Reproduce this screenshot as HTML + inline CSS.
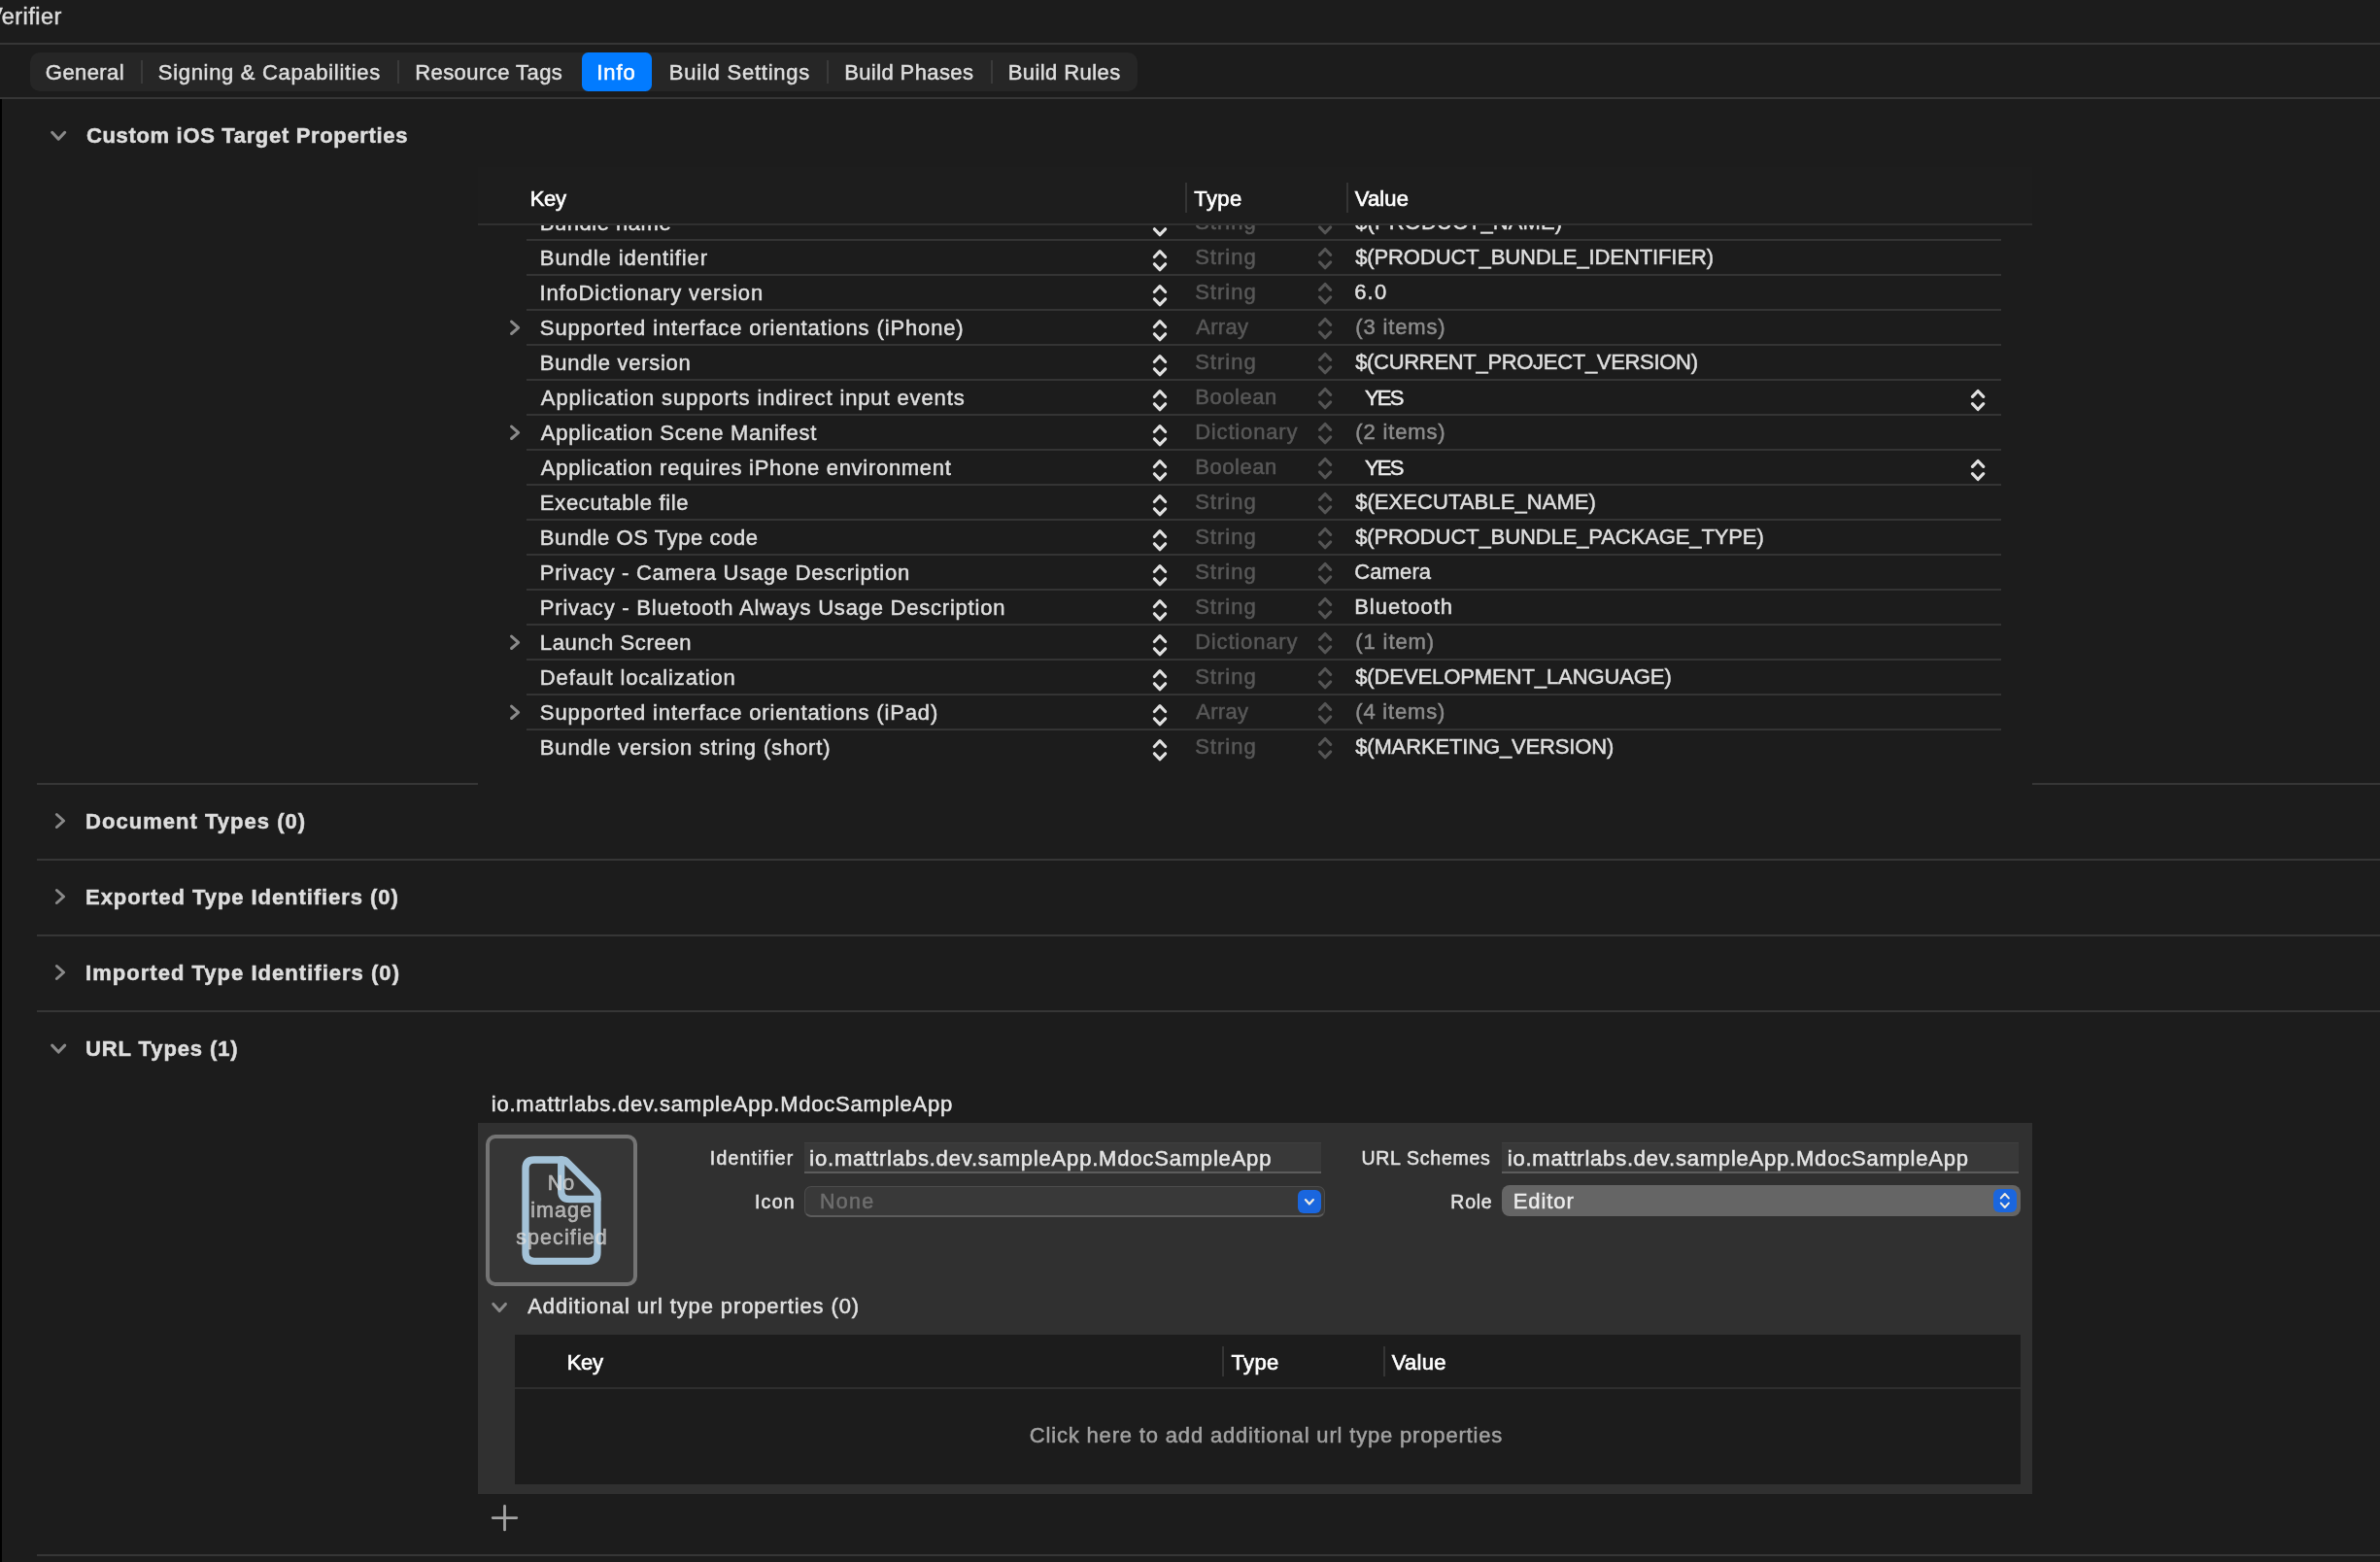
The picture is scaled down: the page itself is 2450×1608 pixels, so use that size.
<!DOCTYPE html>
<html lang="en"><head><meta charset="utf-8"><title>Verifier — Info</title>
<style>
html,body{margin:0;padding:0;background:#1c1c1c;}
body{width:2450px;height:1608px;position:relative;font-family:"Liberation Sans",sans-serif;}
#root{position:absolute;left:0;top:0;width:2450px;height:1608px;overflow:hidden;will-change:transform;}
#root header,#root nav,#root section{position:absolute;left:0;top:0;width:0;height:0;display:block;}
#root div{position:absolute;box-sizing:border-box;}
#root svg{position:absolute;left:0;top:0;overflow:visible;}
#root span{position:absolute;white-space:pre;}
</style></head><body><div id="root">
<header class="titlebar" aria-label="Jump bar">
<div style="left:0px;top:44px;width:2450px;height:2px;background:#363636;"></div>
<div style="left:0px;top:102px;width:2px;height:1506px;background:#000;"></div>
<span class="t" style="left:-13.01px;top:1.56px;font-size:23.5px;line-height:31px;color:#dcdcdc;-webkit-text-stroke:0.5px #dcdcdc;letter-spacing:0.450px;">Verifier</span>
</header>
<nav class="tabbar" aria-label="Target editor tabs">
<div style="left:0px;top:100px;width:2450px;height:2px;background:#363636;"></div>
<div style="left:31px;top:54px;width:1140px;height:40px;background:#262626;border-radius:10px;"></div>
<div style="left:145px;top:62px;width:2px;height:24px;background:#3a3a3a;"></div>
<div style="left:409px;top:62px;width:2px;height:24px;background:#3a3a3a;"></div>
<div style="left:851px;top:62px;width:2px;height:24px;background:#3a3a3a;"></div>
<div style="left:1020px;top:62px;width:2px;height:24px;background:#3a3a3a;"></div>
<div style="left:599px;top:54px;width:72px;height:40px;background:#027bff;border-radius:6.5px;"></div>
<span class="t" style="left:46.85px;top:59.78px;font-size:22px;line-height:29px;color:#dedede;-webkit-text-stroke:0.5px #dedede;letter-spacing:0.420px;">General</span>
<span class="t" style="left:162.85px;top:59.78px;font-size:22px;line-height:29px;color:#dedede;-webkit-text-stroke:0.5px #dedede;letter-spacing:0.685px;">Signing &amp; Capabilities</span>
<span class="t" style="left:427.15px;top:59.78px;font-size:22px;line-height:29px;color:#dedede;-webkit-text-stroke:0.5px #dedede;letter-spacing:0.447px;">Resource Tags</span>
<span class="t" style="left:614.25px;top:59.78px;font-size:22px;line-height:29px;color:#ffffff;-webkit-text-stroke:0.5px #ffffff;letter-spacing:0.913px;">Info</span>
<span class="t" style="left:688.75px;top:59.78px;font-size:22px;line-height:29px;color:#dedede;-webkit-text-stroke:0.5px #dedede;letter-spacing:0.775px;">Build Settings</span>
<span class="t" style="left:869.15px;top:59.78px;font-size:22px;line-height:29px;color:#dedede;-webkit-text-stroke:0.5px #dedede;letter-spacing:0.399px;">Build Phases</span>
<span class="t" style="left:1037.75px;top:59.78px;font-size:22px;line-height:29px;color:#dedede;-webkit-text-stroke:0.5px #dedede;letter-spacing:0.422px;">Build Rules</span>
</nav>
<section class="custom-properties" aria-label="Custom iOS Target Properties">
<div style="left:492px;top:172px;width:1600px;height:58px;background:#1d1d1d;"></div>
<div style="left:492px;top:230px;width:1600px;height:2px;background:#303030;"></div>
<div style="left:1220px;top:188px;width:2px;height:31px;background:#353535;"></div>
<div style="left:1386px;top:188px;width:2px;height:31px;background:#353535;"></div>
<div style="left:542px;top:246px;width:1518px;height:2px;background:#343434;"></div>
<div style="left:542px;top:282px;width:1518px;height:2px;background:#343434;"></div>
<div style="left:542px;top:318px;width:1518px;height:2px;background:#343434;"></div>
<div style="left:542px;top:354px;width:1518px;height:2px;background:#343434;"></div>
<div style="left:542px;top:390px;width:1518px;height:2px;background:#343434;"></div>
<div style="left:542px;top:426px;width:1518px;height:2px;background:#343434;"></div>
<div style="left:542px;top:462px;width:1518px;height:2px;background:#343434;"></div>
<div style="left:542px;top:498px;width:1518px;height:2px;background:#343434;"></div>
<div style="left:542px;top:534px;width:1518px;height:2px;background:#343434;"></div>
<div style="left:542px;top:570px;width:1518px;height:2px;background:#343434;"></div>
<div style="left:542px;top:606px;width:1518px;height:2px;background:#343434;"></div>
<div style="left:542px;top:642px;width:1518px;height:2px;background:#343434;"></div>
<div style="left:542px;top:678px;width:1518px;height:2px;background:#343434;"></div>
<div style="left:542px;top:714px;width:1518px;height:2px;background:#343434;"></div>
<div style="left:542px;top:750px;width:1518px;height:2px;background:#343434;"></div>
<div style="left:38px;top:806px;width:454px;height:2px;background:#363636;"></div>
<div style="left:2092px;top:806px;width:358px;height:2px;background:#363636;"></div>
<svg width="2450" height="1608" viewBox="0 0 2450 1608" fill="none" stroke-linecap="round" stroke-linejoin="round" aria-hidden="true"><path d="M53.7 136.3L60.2 143.2L66.7 136.3" stroke="#8a8a8a" stroke-width="3.1"/><path d="M1188.4 235.8L1194 241.7L1199.6 235.8" stroke="#e0e0e0" stroke-width="3.2"/><path d="M1358.5 233.85L1364.1 239.75L1369.7 233.85" stroke="#555555" stroke-width="3.1"/><path d="M1188.4 264.5L1194 258.6L1199.6 264.5" stroke="#e0e0e0" stroke-width="3.2"/><path d="M1358.5 262.35L1364.1 256.45L1369.7 262.35" stroke="#555555" stroke-width="3.1"/><path d="M1188.4 271.8L1194 277.7L1199.6 271.8" stroke="#e0e0e0" stroke-width="3.2"/><path d="M1358.5 269.85L1364.1 275.75L1369.7 269.85" stroke="#555555" stroke-width="3.1"/><path d="M1188.4 300.5L1194 294.6L1199.6 300.5" stroke="#e0e0e0" stroke-width="3.2"/><path d="M1358.5 298.35L1364.1 292.45L1369.7 298.35" stroke="#555555" stroke-width="3.1"/><path d="M1188.4 307.8L1194 313.7L1199.6 307.8" stroke="#e0e0e0" stroke-width="3.2"/><path d="M1358.5 305.85L1364.1 311.75L1369.7 305.85" stroke="#555555" stroke-width="3.1"/><path d="M1188.4 336.5L1194 330.6L1199.6 336.5" stroke="#e0e0e0" stroke-width="3.2"/><path d="M1358.5 334.35L1364.1 328.45L1369.7 334.35" stroke="#555555" stroke-width="3.1"/><path d="M1188.4 343.8L1194 349.7L1199.6 343.8" stroke="#e0e0e0" stroke-width="3.2"/><path d="M1358.5 341.85L1364.1 347.75L1369.7 341.85" stroke="#555555" stroke-width="3.1"/><path d="M526.55 331.1L533.65 337.3L526.55 343.5" stroke="#8a8a8a" stroke-width="3.0"/><path d="M1188.4 372.5L1194 366.6L1199.6 372.5" stroke="#e0e0e0" stroke-width="3.2"/><path d="M1358.5 370.35L1364.1 364.45L1369.7 370.35" stroke="#555555" stroke-width="3.1"/><path d="M1188.4 379.8L1194 385.7L1199.6 379.8" stroke="#e0e0e0" stroke-width="3.2"/><path d="M1358.5 377.85L1364.1 383.75L1369.7 377.85" stroke="#555555" stroke-width="3.1"/><path d="M2030.5 408.4L2036.1 402.5L2041.7 408.4" stroke="#e0e0e0" stroke-width="3.2"/><path d="M2030.5 415.6L2036.1 421.5L2041.7 415.6" stroke="#e0e0e0" stroke-width="3.2"/><path d="M1188.4 408.5L1194 402.6L1199.6 408.5" stroke="#e0e0e0" stroke-width="3.2"/><path d="M1358.5 406.35L1364.1 400.45L1369.7 406.35" stroke="#555555" stroke-width="3.1"/><path d="M1188.4 415.8L1194 421.7L1199.6 415.8" stroke="#e0e0e0" stroke-width="3.2"/><path d="M1358.5 413.85L1364.1 419.75L1369.7 413.85" stroke="#555555" stroke-width="3.1"/><path d="M1188.4 444.5L1194 438.6L1199.6 444.5" stroke="#e0e0e0" stroke-width="3.2"/><path d="M1358.5 442.35L1364.1 436.45L1369.7 442.35" stroke="#555555" stroke-width="3.1"/><path d="M1188.4 451.8L1194 457.7L1199.6 451.8" stroke="#e0e0e0" stroke-width="3.2"/><path d="M1358.5 449.85L1364.1 455.75L1369.7 449.85" stroke="#555555" stroke-width="3.1"/><path d="M526.55 439.1L533.65 445.3L526.55 451.5" stroke="#8a8a8a" stroke-width="3.0"/><path d="M2030.5 480.4L2036.1 474.5L2041.7 480.4" stroke="#e0e0e0" stroke-width="3.2"/><path d="M2030.5 487.6L2036.1 493.5L2041.7 487.6" stroke="#e0e0e0" stroke-width="3.2"/><path d="M1188.4 480.5L1194 474.6L1199.6 480.5" stroke="#e0e0e0" stroke-width="3.2"/><path d="M1358.5 478.35L1364.1 472.45L1369.7 478.35" stroke="#555555" stroke-width="3.1"/><path d="M1188.4 487.8L1194 493.7L1199.6 487.8" stroke="#e0e0e0" stroke-width="3.2"/><path d="M1358.5 485.85L1364.1 491.75L1369.7 485.85" stroke="#555555" stroke-width="3.1"/><path d="M1188.4 516.5L1194 510.6L1199.6 516.5" stroke="#e0e0e0" stroke-width="3.2"/><path d="M1358.5 514.35L1364.1 508.45L1369.7 514.35" stroke="#555555" stroke-width="3.1"/><path d="M1188.4 523.8L1194 529.7L1199.6 523.8" stroke="#e0e0e0" stroke-width="3.2"/><path d="M1358.5 521.85L1364.1 527.75L1369.7 521.85" stroke="#555555" stroke-width="3.1"/><path d="M1188.4 552.5L1194 546.6L1199.6 552.5" stroke="#e0e0e0" stroke-width="3.2"/><path d="M1358.5 550.35L1364.1 544.45L1369.7 550.35" stroke="#555555" stroke-width="3.1"/><path d="M1188.4 559.8L1194 565.7L1199.6 559.8" stroke="#e0e0e0" stroke-width="3.2"/><path d="M1358.5 557.85L1364.1 563.75L1369.7 557.85" stroke="#555555" stroke-width="3.1"/><path d="M1188.4 588.5L1194 582.6L1199.6 588.5" stroke="#e0e0e0" stroke-width="3.2"/><path d="M1358.5 586.35L1364.1 580.45L1369.7 586.35" stroke="#555555" stroke-width="3.1"/><path d="M1188.4 595.8L1194 601.7L1199.6 595.8" stroke="#e0e0e0" stroke-width="3.2"/><path d="M1358.5 593.85L1364.1 599.75L1369.7 593.85" stroke="#555555" stroke-width="3.1"/><path d="M1188.4 624.5L1194 618.6L1199.6 624.5" stroke="#e0e0e0" stroke-width="3.2"/><path d="M1358.5 622.35L1364.1 616.45L1369.7 622.35" stroke="#555555" stroke-width="3.1"/><path d="M1188.4 631.8L1194 637.7L1199.6 631.8" stroke="#e0e0e0" stroke-width="3.2"/><path d="M1358.5 629.85L1364.1 635.75L1369.7 629.85" stroke="#555555" stroke-width="3.1"/><path d="M1188.4 660.5L1194 654.6L1199.6 660.5" stroke="#e0e0e0" stroke-width="3.2"/><path d="M1358.5 658.35L1364.1 652.45L1369.7 658.35" stroke="#555555" stroke-width="3.1"/><path d="M1188.4 667.8L1194 673.7L1199.6 667.8" stroke="#e0e0e0" stroke-width="3.2"/><path d="M1358.5 665.85L1364.1 671.75L1369.7 665.85" stroke="#555555" stroke-width="3.1"/><path d="M526.55 655.1L533.65 661.3L526.55 667.5" stroke="#8a8a8a" stroke-width="3.0"/><path d="M1188.4 696.5L1194 690.6L1199.6 696.5" stroke="#e0e0e0" stroke-width="3.2"/><path d="M1358.5 694.35L1364.1 688.45L1369.7 694.35" stroke="#555555" stroke-width="3.1"/><path d="M1188.4 703.8L1194 709.7L1199.6 703.8" stroke="#e0e0e0" stroke-width="3.2"/><path d="M1358.5 701.85L1364.1 707.75L1369.7 701.85" stroke="#555555" stroke-width="3.1"/><path d="M1188.4 732.5L1194 726.6L1199.6 732.5" stroke="#e0e0e0" stroke-width="3.2"/><path d="M1358.5 730.35L1364.1 724.45L1369.7 730.35" stroke="#555555" stroke-width="3.1"/><path d="M1188.4 739.8L1194 745.7L1199.6 739.8" stroke="#e0e0e0" stroke-width="3.2"/><path d="M1358.5 737.85L1364.1 743.75L1369.7 737.85" stroke="#555555" stroke-width="3.1"/><path d="M526.55 727.1L533.65 733.3L526.55 739.5" stroke="#8a8a8a" stroke-width="3.0"/><path d="M1188.4 768.5L1194 762.6L1199.6 768.5" stroke="#e0e0e0" stroke-width="3.2"/><path d="M1358.5 766.35L1364.1 760.45L1369.7 766.35" stroke="#555555" stroke-width="3.1"/><path d="M1188.4 775.8L1194 781.7L1199.6 775.8" stroke="#e0e0e0" stroke-width="3.2"/><path d="M1358.5 773.85L1364.1 779.75L1369.7 773.85" stroke="#555555" stroke-width="3.1"/></svg>
<span class="t" style="left:88.95px;top:125.38px;font-size:22px;line-height:29px;color:#dedede;font-weight:700;-webkit-text-stroke:0.5px #dedede;letter-spacing:0.666px;">Custom iOS Target Properties</span>
<span class="t" style="left:545.73px;top:190.18px;font-size:22px;line-height:29px;color:#ffffff;-webkit-text-stroke:0.65px #ffffff;letter-spacing:-0.280px;">Key</span>
<span class="t" style="left:1229.33px;top:190.18px;font-size:22px;line-height:29px;color:#ffffff;-webkit-text-stroke:0.65px #ffffff;letter-spacing:0.363px;">Type</span>
<span class="t" style="left:1394.73px;top:190.18px;font-size:22px;line-height:29px;color:#ffffff;-webkit-text-stroke:0.65px #ffffff;letter-spacing:0.138px;">Value</span>
<span class="t" style="left:555.85px;top:214.58px;font-size:22px;line-height:29px;color:#dfdfdf;-webkit-text-stroke:0.5px #dfdfdf;letter-spacing:0.519px;clip-path:inset(17.4px 0 0 0);">Bundle name</span>
<span class="t" style="left:1230.15px;top:213.88px;font-size:22px;line-height:29px;color:#585858;-webkit-text-stroke:0.5px #585858;letter-spacing:1.013px;clip-path:inset(18.1px 0 0 0);">String</span>
<span class="t" style="left:1395.15px;top:214.08px;font-size:22px;line-height:29px;color:#dfdfdf;-webkit-text-stroke:0.5px #dfdfdf;letter-spacing:0.105px;clip-path:inset(17.9px 0 0 0);">$(PRODUCT_NAME)</span>
<span class="t" style="left:555.85px;top:250.58px;font-size:22px;line-height:29px;color:#dfdfdf;-webkit-text-stroke:0.5px #dfdfdf;letter-spacing:0.897px;">Bundle identifier</span>
<span class="t" style="left:1230.15px;top:249.88px;font-size:22px;line-height:29px;color:#585858;-webkit-text-stroke:0.5px #585858;letter-spacing:1.013px;">String</span>
<span class="t" style="left:1395.15px;top:250.08px;font-size:22px;line-height:29px;color:#dfdfdf;-webkit-text-stroke:0.5px #dfdfdf;letter-spacing:-0.099px;">$(PRODUCT_BUNDLE_IDENTIFIER)</span>
<span class="t" style="left:555.45px;top:286.58px;font-size:22px;line-height:29px;color:#dfdfdf;-webkit-text-stroke:0.5px #dfdfdf;letter-spacing:0.867px;">InfoDictionary version</span>
<span class="t" style="left:1230.15px;top:285.88px;font-size:22px;line-height:29px;color:#585858;-webkit-text-stroke:0.5px #585858;letter-spacing:1.013px;">String</span>
<span class="t" style="left:1394.15px;top:286.08px;font-size:22px;line-height:29px;color:#dfdfdf;-webkit-text-stroke:0.5px #dfdfdf;letter-spacing:1.226px;">6.0</span>
<span class="t" style="left:555.85px;top:322.58px;font-size:22px;line-height:29px;color:#dfdfdf;-webkit-text-stroke:0.5px #dfdfdf;letter-spacing:0.867px;">Supported interface orientations (iPhone)</span>
<span class="t" style="left:1231.15px;top:321.88px;font-size:22px;line-height:29px;color:#585858;-webkit-text-stroke:0.5px #585858;letter-spacing:0.335px;">Array</span>
<span class="t" style="left:1395.25px;top:322.08px;font-size:22px;line-height:29px;color:#8c8c8c;-webkit-text-stroke:0.5px #8c8c8c;letter-spacing:0.846px;">(3 items)</span>
<span class="t" style="left:555.85px;top:358.58px;font-size:22px;line-height:29px;color:#dfdfdf;-webkit-text-stroke:0.5px #dfdfdf;letter-spacing:0.715px;">Bundle version</span>
<span class="t" style="left:1230.15px;top:357.88px;font-size:22px;line-height:29px;color:#585858;-webkit-text-stroke:0.5px #585858;letter-spacing:1.013px;">String</span>
<span class="t" style="left:1395.15px;top:358.08px;font-size:22px;line-height:29px;color:#dfdfdf;-webkit-text-stroke:0.5px #dfdfdf;letter-spacing:-0.311px;">$(CURRENT_PROJECT_VERSION)</span>
<span class="t" style="left:556.85px;top:394.58px;font-size:22px;line-height:29px;color:#dfdfdf;-webkit-text-stroke:0.5px #dfdfdf;letter-spacing:0.876px;">Application supports indirect input events</span>
<span class="t" style="left:1230.15px;top:393.88px;font-size:22px;line-height:29px;color:#585858;-webkit-text-stroke:0.5px #585858;letter-spacing:0.566px;">Boolean</span>
<span class="t" style="left:1404.95px;top:394.88px;font-size:22px;line-height:29px;color:#ebebeb;-webkit-text-stroke:0.5px #ebebeb;letter-spacing:-1.774px;">YES</span>
<span class="t" style="left:556.85px;top:430.58px;font-size:22px;line-height:29px;color:#dfdfdf;-webkit-text-stroke:0.5px #dfdfdf;letter-spacing:0.721px;">Application Scene Manifest</span>
<span class="t" style="left:1230.15px;top:429.88px;font-size:22px;line-height:29px;color:#585858;-webkit-text-stroke:0.5px #585858;letter-spacing:0.832px;">Dictionary</span>
<span class="t" style="left:1395.25px;top:430.08px;font-size:22px;line-height:29px;color:#8c8c8c;-webkit-text-stroke:0.5px #8c8c8c;letter-spacing:0.846px;">(2 items)</span>
<span class="t" style="left:556.85px;top:466.58px;font-size:22px;line-height:29px;color:#dfdfdf;-webkit-text-stroke:0.5px #dfdfdf;letter-spacing:0.711px;">Application requires iPhone environment</span>
<span class="t" style="left:1230.15px;top:465.88px;font-size:22px;line-height:29px;color:#585858;-webkit-text-stroke:0.5px #585858;letter-spacing:0.566px;">Boolean</span>
<span class="t" style="left:1404.95px;top:466.88px;font-size:22px;line-height:29px;color:#ebebeb;-webkit-text-stroke:0.5px #ebebeb;letter-spacing:-1.774px;">YES</span>
<span class="t" style="left:555.85px;top:502.58px;font-size:22px;line-height:29px;color:#dfdfdf;-webkit-text-stroke:0.5px #dfdfdf;letter-spacing:0.689px;">Executable file</span>
<span class="t" style="left:1230.15px;top:501.88px;font-size:22px;line-height:29px;color:#585858;-webkit-text-stroke:0.5px #585858;letter-spacing:1.013px;">String</span>
<span class="t" style="left:1395.15px;top:502.08px;font-size:22px;line-height:29px;color:#dfdfdf;-webkit-text-stroke:0.5px #dfdfdf;letter-spacing:0.070px;">$(EXECUTABLE_NAME)</span>
<span class="t" style="left:555.85px;top:538.58px;font-size:22px;line-height:29px;color:#dfdfdf;-webkit-text-stroke:0.5px #dfdfdf;letter-spacing:0.584px;">Bundle OS Type code</span>
<span class="t" style="left:1230.15px;top:537.88px;font-size:22px;line-height:29px;color:#585858;-webkit-text-stroke:0.5px #585858;letter-spacing:1.013px;">String</span>
<span class="t" style="left:1395.15px;top:538.08px;font-size:22px;line-height:29px;color:#dfdfdf;-webkit-text-stroke:0.5px #dfdfdf;letter-spacing:-0.110px;">$(PRODUCT_BUNDLE_PACKAGE_TYPE)</span>
<span class="t" style="left:555.85px;top:574.58px;font-size:22px;line-height:29px;color:#dfdfdf;-webkit-text-stroke:0.5px #dfdfdf;letter-spacing:0.744px;">Privacy - Camera Usage Description</span>
<span class="t" style="left:1230.15px;top:573.88px;font-size:22px;line-height:29px;color:#585858;-webkit-text-stroke:0.5px #585858;letter-spacing:1.013px;">String</span>
<span class="t" style="left:1394.15px;top:574.08px;font-size:22px;line-height:29px;color:#dfdfdf;-webkit-text-stroke:0.5px #dfdfdf;letter-spacing:0.138px;">Camera</span>
<span class="t" style="left:555.85px;top:610.58px;font-size:22px;line-height:29px;color:#dfdfdf;-webkit-text-stroke:0.5px #dfdfdf;letter-spacing:0.778px;">Privacy - Bluetooth Always Usage Description</span>
<span class="t" style="left:1230.15px;top:609.88px;font-size:22px;line-height:29px;color:#585858;-webkit-text-stroke:0.5px #585858;letter-spacing:1.013px;">String</span>
<span class="t" style="left:1394.15px;top:610.08px;font-size:22px;line-height:29px;color:#dfdfdf;-webkit-text-stroke:0.5px #dfdfdf;letter-spacing:0.997px;">Bluetooth</span>
<span class="t" style="left:555.85px;top:646.58px;font-size:22px;line-height:29px;color:#dfdfdf;-webkit-text-stroke:0.5px #dfdfdf;letter-spacing:0.628px;">Launch Screen</span>
<span class="t" style="left:1230.15px;top:645.88px;font-size:22px;line-height:29px;color:#585858;-webkit-text-stroke:0.5px #585858;letter-spacing:0.832px;">Dictionary</span>
<span class="t" style="left:1395.25px;top:646.08px;font-size:22px;line-height:29px;color:#8c8c8c;-webkit-text-stroke:0.5px #8c8c8c;letter-spacing:0.895px;">(1 item)</span>
<span class="t" style="left:555.85px;top:682.58px;font-size:22px;line-height:29px;color:#dfdfdf;-webkit-text-stroke:0.5px #dfdfdf;letter-spacing:0.857px;">Default localization</span>
<span class="t" style="left:1230.15px;top:681.88px;font-size:22px;line-height:29px;color:#585858;-webkit-text-stroke:0.5px #585858;letter-spacing:1.013px;">String</span>
<span class="t" style="left:1395.15px;top:682.08px;font-size:22px;line-height:29px;color:#dfdfdf;-webkit-text-stroke:0.5px #dfdfdf;letter-spacing:-0.091px;">$(DEVELOPMENT_LANGUAGE)</span>
<span class="t" style="left:555.85px;top:718.58px;font-size:22px;line-height:29px;color:#dfdfdf;-webkit-text-stroke:0.5px #dfdfdf;letter-spacing:0.862px;">Supported interface orientations (iPad)</span>
<span class="t" style="left:1231.15px;top:717.88px;font-size:22px;line-height:29px;color:#585858;-webkit-text-stroke:0.5px #585858;letter-spacing:0.335px;">Array</span>
<span class="t" style="left:1395.25px;top:718.08px;font-size:22px;line-height:29px;color:#8c8c8c;-webkit-text-stroke:0.5px #8c8c8c;letter-spacing:0.808px;">(4 items)</span>
<span class="t" style="left:555.85px;top:754.58px;font-size:22px;line-height:29px;color:#dfdfdf;-webkit-text-stroke:0.5px #dfdfdf;letter-spacing:0.840px;">Bundle version string (short)</span>
<span class="t" style="left:1230.15px;top:753.88px;font-size:22px;line-height:29px;color:#585858;-webkit-text-stroke:0.5px #585858;letter-spacing:1.013px;">String</span>
<span class="t" style="left:1395.15px;top:754.08px;font-size:22px;line-height:29px;color:#dfdfdf;-webkit-text-stroke:0.5px #dfdfdf;letter-spacing:-0.142px;">$(MARKETING_VERSION)</span>
</section>
<section class="document-types" aria-label="Document Types (0)">
<div style="left:38px;top:884px;width:2412px;height:2px;background:#363636;"></div>
<svg width="2450" height="1608" viewBox="0 0 2450 1608" fill="none" stroke-linecap="round" stroke-linejoin="round" aria-hidden="true"><path d="M58.4 838.5L65.6 845L58.4 851.5" stroke="#8a8a8a" stroke-width="3.0"/></svg>
<span class="t" style="left:88.05px;top:831.38px;font-size:22px;line-height:29px;color:#dedede;font-weight:700;-webkit-text-stroke:0.5px #dedede;letter-spacing:1.030px;">Document Types (0)</span>
</section>
<section class="exported-types" aria-label="Exported Type Identifiers (0)">
<div style="left:38px;top:962px;width:2412px;height:2px;background:#363636;"></div>
<svg width="2450" height="1608" viewBox="0 0 2450 1608" fill="none" stroke-linecap="round" stroke-linejoin="round" aria-hidden="true"><path d="M58.4 916.5L65.6 923L58.4 929.5" stroke="#8a8a8a" stroke-width="3.0"/></svg>
<span class="t" style="left:88.05px;top:909.38px;font-size:22px;line-height:29px;color:#dedede;font-weight:700;-webkit-text-stroke:0.5px #dedede;letter-spacing:0.939px;">Exported Type Identifiers (0)</span>
</section>
<section class="imported-types" aria-label="Imported Type Identifiers (0)">
<div style="left:38px;top:1040px;width:2412px;height:2px;background:#363636;"></div>
<svg width="2450" height="1608" viewBox="0 0 2450 1608" fill="none" stroke-linecap="round" stroke-linejoin="round" aria-hidden="true"><path d="M58.4 994.5L65.6 1001L58.4 1007.5" stroke="#8a8a8a" stroke-width="3.0"/></svg>
<span class="t" style="left:88.05px;top:987.38px;font-size:22px;line-height:29px;color:#dedede;font-weight:700;-webkit-text-stroke:0.5px #dedede;letter-spacing:1.026px;">Imported Type Identifiers (0)</span>
</section>
<section class="url-types" aria-label="URL Types (1)">
<div style="left:492px;top:1156px;width:1600px;height:382px;background:#303030;"></div>
<div style="left:500px;top:1168px;width:156px;height:156px;background:#363636;border:4px solid #747474;border-radius:10px;"></div>
<div style="left:828px;top:1176px;width:532px;height:32px;background:#393939;border-bottom:2px solid #5c5c5c;border-top:1px solid #3f3f3f;"></div>
<div style="left:1546px;top:1176px;width:532px;height:32px;background:#393939;border-bottom:2px solid #5c5c5c;border-top:1px solid #3f3f3f;"></div>
<div style="left:828px;top:1221px;width:536px;height:32px;background:#393939;border:1px solid #4c4c4c;border-bottom:2px solid #5c5c5c;border-radius:7px;"></div>
<div style="left:1336px;top:1225px;width:24px;height:24px;background:#1a66de;border-radius:6px;"></div>
<div style="left:1546px;top:1220px;width:534px;height:32px;background:#656565;border-radius:8px;"></div>
<div style="left:2052px;top:1224px;width:24px;height:24px;background:#1a66de;border-radius:6px;"></div>
<div style="left:530px;top:1374px;width:1550px;height:154px;background:#1c1c1c;"></div>
<div style="left:530px;top:1428px;width:1550px;height:2px;background:#2e2e2e;"></div>
<div style="left:1258px;top:1386px;width:2px;height:31px;background:#353535;"></div>
<div style="left:1424px;top:1386px;width:2px;height:31px;background:#353535;"></div>
<div style="left:38px;top:1600px;width:2412px;height:2px;background:#363636;"></div>
<svg width="2450" height="1608" viewBox="0 0 2450 1608" fill="none" stroke-linecap="round" stroke-linejoin="round" aria-hidden="true"><path d="M53.7 1076.15L60.2 1083.05L66.7 1076.15" stroke="#8a8a8a" stroke-width="3.1"/><path d="M550 1194H578.5Q581.5 1194 583.6 1196.1L612.9 1225.4Q615 1227.5 615 1230.5V1289.3Q615 1298.3 606 1298.3H550Q541 1298.3 541 1289.3V1203Q541 1194 550 1194Z" stroke="#a3c2d8" stroke-width="7.3"/><path d="M577.7 1194V1226Q577.7 1234.5 586.2 1234.5H615" stroke="#a3c2d8" stroke-width="7.3"/><path d="M1343.9 1235.1L1347.9 1239.5L1351.9 1235.1" stroke="#f0ece2" stroke-width="2.2"/><path d="M2059.8 1233.4L2063.8 1229L2067.8 1233.4" stroke="#f0ece2" stroke-width="2.0"/><path d="M2059.8 1238.6L2063.8 1243L2067.8 1238.6" stroke="#f0ece2" stroke-width="2.0"/><path d="M507.8 1342.4L514.1 1349.6L520.4 1342.4" stroke="#8a8a8a" stroke-width="3.0"/><path d="M507.2 1562.6H531.8M519.5 1550.3V1574.9" stroke="#a4a4a4" stroke-width="2.8"/></svg>
<span class="t" style="left:88.05px;top:1065.38px;font-size:22px;line-height:29px;color:#dedede;font-weight:700;-webkit-text-stroke:0.5px #dedede;letter-spacing:0.896px;">URL Types (1)</span>
<span class="t" style="left:505.75px;top:1122.18px;font-size:22px;line-height:29px;color:#e6e6e6;-webkit-text-stroke:0.5px #e6e6e6;letter-spacing:0.794px;">io.mattrlabs.dev.sampleApp.MdocSampleApp</span>
<span class="t" style="left:563.75px;top:1203.85px;font-size:21.5px;line-height:28px;color:rgba(225,225,225,0.68);-webkit-text-stroke:0.5px rgba(225,225,225,0.68);letter-spacing:-0.127px;">No</span>
<span class="t" style="left:546.15px;top:1232.05px;font-size:21.5px;line-height:28px;color:rgba(225,225,225,0.68);-webkit-text-stroke:0.5px rgba(225,225,225,0.68);letter-spacing:1.050px;">image</span>
<span class="t" style="left:531.15px;top:1260.05px;font-size:21.5px;line-height:28px;color:rgba(225,225,225,0.68);-webkit-text-stroke:0.5px rgba(225,225,225,0.68);letter-spacing:1.100px;">specified</span>
<span class="t" style="left:730.85px;top:1180.44px;font-size:19.5px;line-height:25px;color:#e4e4e4;-webkit-text-stroke:0.5px #e4e4e4;letter-spacing:1.178px;">Identifier</span>
<span class="t" style="left:776.95px;top:1224.54px;font-size:19.5px;line-height:25px;color:#e4e4e4;-webkit-text-stroke:0.5px #e4e4e4;letter-spacing:1.262px;">Icon</span>
<span class="t" style="left:1401.45px;top:1180.44px;font-size:19.5px;line-height:25px;color:#e4e4e4;-webkit-text-stroke:0.5px #e4e4e4;letter-spacing:0.734px;">URL Schemes</span>
<span class="t" style="left:1493.35px;top:1224.54px;font-size:19.5px;line-height:25px;color:#e4e4e4;-webkit-text-stroke:0.5px #e4e4e4;letter-spacing:0.713px;">Role</span>
<span class="t" style="left:833.25px;top:1177.58px;font-size:22px;line-height:29px;color:#e6e6e6;-webkit-text-stroke:0.5px #e6e6e6;letter-spacing:0.812px;">io.mattrlabs.dev.sampleApp.MdocSampleApp</span>
<span class="t" style="left:1551.75px;top:1177.58px;font-size:22px;line-height:29px;color:#e6e6e6;-webkit-text-stroke:0.5px #e6e6e6;letter-spacing:0.789px;">io.mattrlabs.dev.sampleApp.MdocSampleApp</span>
<span class="t" style="left:844.05px;top:1223.25px;font-size:21.5px;line-height:28px;color:#6e6e6e;-webkit-text-stroke:0.5px #6e6e6e;letter-spacing:1.220px;">None</span>
<span class="t" style="left:1557.75px;top:1221.68px;font-size:22px;line-height:29px;color:#ececec;-webkit-text-stroke:0.5px #ececec;letter-spacing:0.911px;">Editor</span>
<span class="t" style="left:543.25px;top:1329.78px;font-size:22px;line-height:29px;color:#e2e2e2;-webkit-text-stroke:0.5px #e2e2e2;letter-spacing:0.879px;">Additional url type properties (0)</span>
<span class="t" style="left:583.73px;top:1388.18px;font-size:22px;line-height:29px;color:#ffffff;-webkit-text-stroke:0.65px #ffffff;letter-spacing:-0.330px;">Key</span>
<span class="t" style="left:1267.53px;top:1388.18px;font-size:22px;line-height:29px;color:#ffffff;-webkit-text-stroke:0.65px #ffffff;letter-spacing:0.363px;">Type</span>
<span class="t" style="left:1432.73px;top:1388.18px;font-size:22px;line-height:29px;color:#ffffff;-webkit-text-stroke:0.65px #ffffff;letter-spacing:0.313px;">Value</span>
<span class="t" style="left:1059.75px;top:1463.38px;font-size:22px;line-height:29px;color:#a2a2a2;-webkit-text-stroke:0.5px #a2a2a2;letter-spacing:0.830px;">Click here to add additional url type properties</span>
</section>
</div></body></html>
